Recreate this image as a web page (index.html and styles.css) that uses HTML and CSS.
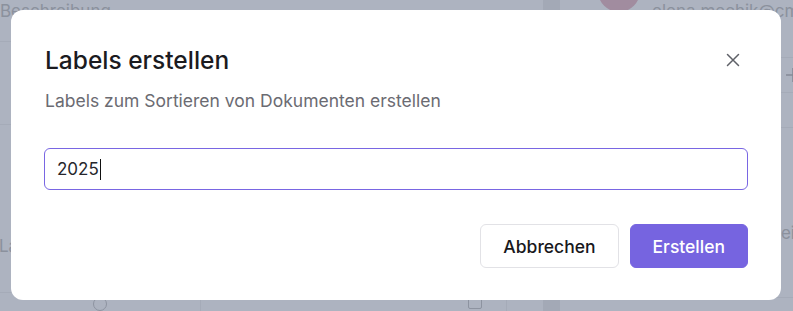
FILE: index.html
```html
<!DOCTYPE html>
<html lang="de">
<head>
  <meta charset="UTF-8" />
  <title>Labels erstellen</title>
  <link rel="stylesheet" href="styles.css">
</head>
<body>
  <div class="app">
    <div class="app-main">
      <div class="row row-top"><span class="muted">Beschreibung</span></div>
      <div class="row row-mid"></div>
      <div class="row row-label"><span class="muted">Labels</span></div>
      <div class="row-foot">
        <span class="foot-cell"><span class="ring"></span></span>
        <span class="foot-cell wide"><span class="box"></span></span>
        <span class="foot-cell narrow"></span>
      </div>
    </div>
    <div class="app-split"></div>
    <div class="app-side">
      <div class="user">
        <span class="avatar"></span>
        <span class="muted email">elena.mechik@cmail.de</span>
      </div>
      <div class="side-row">
        <svg class="plus" width="16" height="16" viewBox="0 0 16 16" stroke="#858b97" stroke-width="1.6">
          <path d="M8 1v14M1 8h14" />
        </svg>
      </div>
      <div class="side-row"></div>
      <div class="side-row tall"><span class="muted">Anzeige</span></div>
    </div>
  </div>

  <div class="overlay">
    <div class="dialog">
      <div class="dialog-head">
        <h2>Labels erstellen</h2>
        <button class="close" aria-label="Schließen">
          <svg width="16" height="16" viewBox="0 0 16 16" fill="none" stroke="#5f6168" stroke-width="1.5" stroke-linecap="round">
            <path d="M2.5 2.5l11 11M13.5 2.5l-11 11" />
          </svg>
        </button>
      </div>
      <p class="dialog-sub">Labels zum Sortieren von Dokumenten erstellen</p>
      <div class="field">2025<span class="caret"></span></div>
      <div class="actions">
        <button class="btn btn-ghost">Abbrechen</button>
        <button class="btn btn-primary">Erstellen</button>
      </div>
    </div>
  </div>
</body>
</html>
```

FILE: styles.css
```css
* {
  box-sizing: border-box;
}

body {
  margin: 0;
  font-family: Inter, "Noto Sans", sans-serif;
  background: #adb3c0;
  width: 793px;
  height: 311px;
  overflow: hidden;
  position: relative;
}

/* app behind the dimmed overlay */
.app {
  display: flex;
  height: 311px;
  background: #adb3c0;
}

.app-main {
  flex: none;
  width: 543px;
  display: flex;
  flex-direction: column;
}

.row {
  border-bottom: 1px solid #a5abb8;
}

.row-top {
  height: 43px;
  padding-top: 1px;
}

.row-mid {
  height: 86px;
}

.row-label {
  height: 171px;
  display: flex;
  align-items: flex-end;
  padding-bottom: 36px;
  margin-left: -1px;
  border-bottom: none;
}

.row-foot {
  flex: 1;
  display: flex;
  border-top: 1px solid #a5abb8;
}

.foot-cell {
  width: 201px;
  border-right: 1px solid #a5abb8;
  display: flex;
  justify-content: center;
  padding-top: 4px;
}

.foot-cell.wide {
  width: 306px;
  justify-content: flex-end;
  padding-right: 24px;
}

.foot-cell.narrow {
  flex: 1;
  border-right: none;
}

.ring {
  width: 14px;
  height: 14px;
  border: 1.5px solid #8d93a0;
  border-radius: 50%;
}

.box {
  width: 14px;
  height: 12px;
  border: 1.5px solid #8d93a0;
  border-radius: 2px;
}

.muted {
  color: #8b919d;
  font-size: 17px;
  line-height: 20px;
  white-space: nowrap;
}

.app-split {
  flex: none;
  width: 17px;
  background: #a3a9b6;
}

.app-side {
  flex: 1;
  min-width: 0;
  display: flex;
  flex-direction: column;
  overflow: hidden;
}

.user {
  height: 58px;
  display: flex;
  align-items: flex-start;
  gap: 12px;
  padding-left: 38px;
  border-bottom: 1px solid #a5abb8;
}

.avatar {
  flex: none;
  width: 42px;
  height: 42px;
  border-radius: 50%;
  background: #a18c9f;
  margin-top: -30px;
}

.email {
  margin-top: 1px;
}

.side-row {
  flex: none;
  height: 35px;
  border-bottom: 1px solid #a5abb8;
  display: flex;
  justify-content: flex-end;
  align-items: center;
}

.side-row.tall {
  height: 170px;
  justify-content: flex-start;
  padding: 40px 0 0 190px;
}

.plus {
  flex: none;
  margin-right: -8px;
}

/* modal */
.overlay {
  position: absolute;
  inset: 0;
  padding: 10px 12px 11px 11px;
}

.dialog {
  background: #fff;
  border-radius: 12px;
  height: 290px;
  padding: 35px 33px 32px 33px;
  display: flex;
  flex-direction: column;
}

.dialog-head {
  display: flex;
  justify-content: space-between;
  align-items: center;
}

h2 {
  margin: 0;
  font-size: 24.5px;
  font-weight: 500;
  color: #1b1b1f;
  line-height: 30px;
  padding-left: 1px;
}

.close {
  border: none;
  background: none;
  padding: 0;
  width: 16px;
  height: 16px;
  margin-right: 7px;
  cursor: pointer;
}

.dialog-sub {
  margin: 14px 0 0;
  font-size: 17.5px;
  color: #6b6b72;
  line-height: 24px;
  padding-left: 1px;
}

.field {
  margin-top: 35px;
  height: 42px;
  border: 1px solid #7966e3;
  border-radius: 6px;
  padding: 0 12px;
  font-size: 17px;
  color: #26262b;
  display: flex;
  align-items: center;
}

.caret {
  display: inline-block;
  width: 1px;
  height: 21px;
  background: #111;
  margin-left: 1px;
}

.actions {
  margin-top: auto;
  display: flex;
  justify-content: flex-end;
  gap: 11px;
}

.btn {
  height: 44px;
  padding: 0 22px;
  border-radius: 6px;
  font-family: Inter, "Noto Sans", sans-serif;
  font-size: 17.5px;
  font-weight: 500;
  cursor: pointer;
}

.btn-ghost {
  background: #fff;
  border: 1px solid #e2e2e6;
  color: #18181c;
}

.btn-primary {
  background: #7664e0;
  border: 1px solid #7664e0;
  color: #fff;
}

.btn-primary:hover {
  background: #6a57d6;
}
```
